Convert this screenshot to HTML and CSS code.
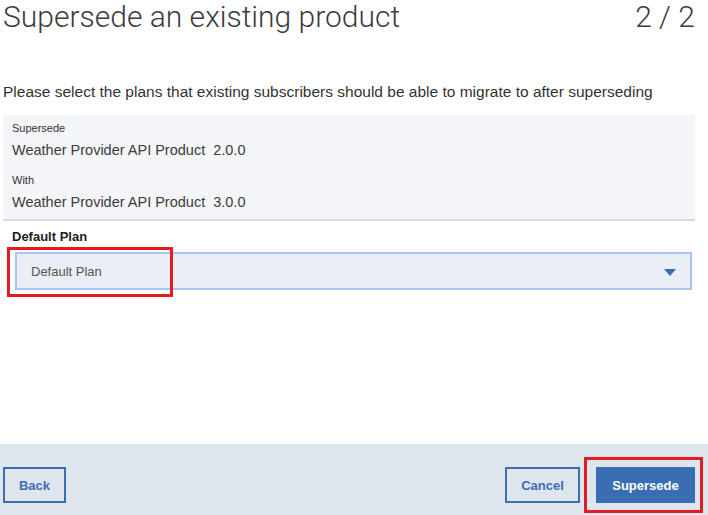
FILE: index.html
```html
<!DOCTYPE html>
<html>
<head>
<meta charset="utf-8">
<link rel="stylesheet" href="styles.css">
</head>
<body>
<div class="page">
  <header class="head">
    <h1 class="title">Supersede an existing product</h1>
    <div class="step">2 / 2</div>
  </header>
  <p class="intro">Please select the plans that existing subscribers should be able to migrate to after superseding</p>
  <section class="summary">
    <div class="label">Supersede</div>
    <div class="value">Weather Provider API Product&nbsp; 2.0.0</div>
    <div class="label second">With</div>
    <div class="value">Weather Provider API Product&nbsp; 3.0.0</div>
  </section>
  <section class="plan">
    <div class="plan-label">Default Plan</div>
    <div class="select-wrap">
      <div class="select">
        <span class="select-text">Default Plan</span>
        <svg class="caret" width="12" height="7" viewBox="0 0 12 7"><path d="M0 0h12L6 7z" fill="#3b6db3"/></svg>
      </div>
      <div class="highlight hl-select"></div>
    </div>
  </section>
  <div class="spacer"></div>
  <footer class="foot">
    <button class="btn btn-outline">Back</button>
    <div class="right">
      <button class="btn btn-outline cancel">Cancel</button>
      <div class="primary-wrap">
        <button class="btn btn-primary">Supersede</button>
        <div class="highlight hl-primary"></div>
      </div>
    </div>
  </footer>
</div>
</body>
</html>
```
FILE: styles.css
```css
* { box-sizing: border-box; }
html, body { margin: 0; padding: 0; }
body {
  width: 708px;
  height: 515px;
  overflow: hidden;
  background: #fff;
  font-family: "Liberation Sans", Arial, sans-serif;
  color: #323232;
}
.page {
  height: 515px;
  display: flex;
  flex-direction: column;
}
.head {
  display: flex;
  justify-content: space-between;
  align-items: flex-start;
  padding: 0 13px 0 3px;
  height: 36px;
}
.title, .step {
  margin: 0;
  font-family: Roboto, "Liberation Sans", sans-serif;
  font-weight: 300;
  font-size: 30px;
  line-height: 34px;
  color: #3c3c3c;
  letter-spacing: 0;
}
.intro {
  margin: 46px 0 0 3px;
  font-size: 15.5px;
  line-height: 20px;
  color: #333;
}
.summary {
  margin: 13px 13px 0 3px;
  background: #f4f5f9;
  border-bottom: 2px solid #d8d9dc;
  padding: 6px 9px 8px;
  height: 106px;
}
.label {
  font-size: 11px;
  line-height: 14px;
  color: #333;
}
.label.second { margin-top: 14px; }
.value {
  margin-top: 6px;
  font-size: 14.5px;
  line-height: 18px;
  color: #3c3c3c;
}
.plan {
  padding: 8px 16px 0 12px;
}
.plan-label {
  font-size: 13px;
  font-weight: bold;
  line-height: 16px;
  color: #222;
}
.select-wrap {
  position: relative;
  margin-top: 7px;
  padding-left: 3px;
}
.select {
  height: 38px;
  background: #eaeef5;
  border: 2px solid #a7c4f2;
  display: flex;
  align-items: center;
  justify-content: space-between;
  padding: 0 14px 0 14px;
}
.select-text {
  font-size: 13px;
  color: #555;
}
.caret { margin-top: 2px; }
.highlight {
  position: absolute;
  border: 3px solid #e41b23;
  pointer-events: none;
}
.hl-select {
  left: -5px;
  top: -5px;
  width: 166px;
  height: 50px;
}
.spacer { flex: 1; }
.foot {
  height: 71px;
  background: #dfe5ec;
  display: flex;
  justify-content: space-between;
  align-items: flex-start;
  padding: 23px 13px 0 3px;
}
.right {
  display: flex;
  align-items: center;
  gap: 16px;
}
.btn {
  font-family: "Liberation Sans", Arial, sans-serif;
  font-weight: bold;
  font-size: 13px;
  height: 36px;
  padding: 0;
  cursor: pointer;
}
.btn-outline {
  background: transparent;
  border: 2px solid #3b6db3;
  color: #3b6db3;
  width: 63px;
}
.cancel { width: 75px; }
.btn-primary {
  background: #3b6db3;
  border: 0;
  color: #fff;
  width: 99px;
}
.primary-wrap { position: relative; display: flex; }
.hl-primary {
  left: -12px;
  top: -10px;
  width: 119px;
  height: 56px;
}
```
